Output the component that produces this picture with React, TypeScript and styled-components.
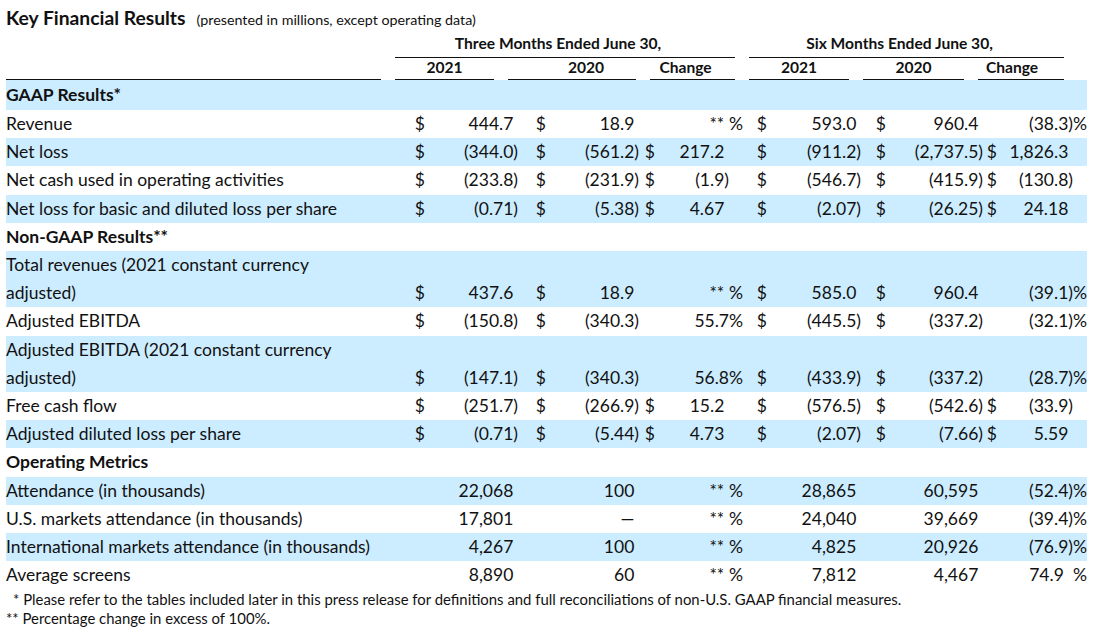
import React from 'react';
import styled, { createGlobalStyle } from 'styled-components';

const GlobalStyle = createGlobalStyle`
  html, body { margin: 0; padding: 0; background: #ffffff; }
  body {
    font-family: Lato, "Liberation Sans", Arial, sans-serif;
    color: #111111;
    -webkit-font-smoothing: antialiased;
  }
`;

const ROW_COLS = '394px 25px 93px 28px 93px 16px 88px 24px 94px 25px 97px 14px 90px';
const HEAD_COLS = '375px 99px 128px 85px 100px 101px 86px';
const RULE = '1.5px solid #111111';

const Page = styled.div`
  width: 1099px;
  height: 640px;
  padding-left: 6px;
  box-sizing: border-box;
  overflow: hidden;
`;

const TitleBar = styled.div`
  display: flex;
  align-items: baseline;
  gap: 11px;
  height: 32px;
  padding-top: 7px;
  box-sizing: border-box;
`;

const Title = styled.h1`
  margin: 0;
  font-size: 19.3px;
  font-weight: 700;
  line-height: 22px;
`;

const Subtitle = styled.span`
  font-size: 14.3px;
  line-height: 22px;
`;

const HeadGrid = styled.div`
  display: grid;
  grid-template-columns: ${HEAD_COLS};
  column-gap: 14px;
  font-size: 15.6px;
  font-weight: 700;
`;

const GroupHead = styled.div`
  grid-column: span 3;
  text-align: center;
  line-height: 18px;
  padding: 2px 0 5px;
  border-bottom: ${RULE};
  white-space: nowrap;
`;

const Blank = styled.div``;

const ColHead = styled.div`
  text-align: center;
  line-height: 18px;
  padding: 0 0 3px;
  border-bottom: ${RULE};
  white-space: nowrap;
`;

const ColRule = styled.div`
  border-bottom: ${RULE};
  padding: 0 0 3px;
  line-height: 18px;
`;

const ShiftText = styled.span<{ $shift: number }>`
  display: inline-block;
  transform: translateX(${p => p.$shift}px);
`;

const Table = styled.div`
  display: flex;
  flex-direction: column;
  width: 1081px;
  font-size: 17.5px;
`;

const Row = styled.div`
  display: grid;
  grid-template-columns: ${ROW_COLS};
  align-items: end;
  line-height: 28.2px;
  &:nth-child(odd) { background: #ccecff; }
  &:first-child { line-height: 30px; }
`;

const Label = styled.div<{ $bold?: boolean }>`
  font-weight: ${p => (p.$bold ? 700 : 400)};
  white-space: nowrap;
`;

const Num = styled.div`
  text-align: right;
  white-space: pre;
`;

const Ghost = styled.span`
  visibility: hidden;
`;

const Notes = styled.div`
  padding-top: 1px;
  font-size: 14.9px;
  line-height: 19px;
`;

const Note = styled.div<{ $indent?: number }>`
  padding-left: ${p => p.$indent ?? 0}px;
  white-space: nowrap;
`;

type DataRow = { kind: 'data'; label: string[]; c: string[] };
type SectionRow = { kind: 'section'; label: string };
type AnyRow = DataRow | SectionRow;

const sec = (label: string): SectionRow => ({ kind: 'section', label });
const row = (label: string | string[], c: string[]): DataRow => ({
  kind: 'data',
  label: Array.isArray(label) ? label : [label],
  c,
});

const rows: AnyRow[] = [
  sec('GAAP Results*'),
  row('Revenue', ['$', '444.7', '$', '18.9', '', '**[)]%', '$', '593.0', '$', '960.4', '', '(38.3)%']),
  row('Net loss', ['$', '(344.0)', '$', '(561.2)', '$', '217.2[)%]', '$', '(911.2)', '$', '(2,737.5)', '$', '1,826.3[)%]']),
  row('Net cash used in operating activities', ['$', '(233.8)', '$', '(231.9)', '$', '(1.9)[%]', '$', '(546.7)', '$', '(415.9)', '$', '(130.8)[%]']),
  row('Net loss for basic and diluted loss per share', ['$', '(0.71)', '$', '(5.38)', '$', '4.67[)%]', '$', '(2.07)', '$', '(26.25)', '$', '24.18[)%]']),
  sec('Non-GAAP Results**'),
  row(['Total revenues (2021 constant currency', 'adjusted)'], ['$', '437.6', '$', '18.9', '', '**[)]%', '$', '585.0', '$', '960.4', '', '(39.1)%']),
  row('Adjusted EBITDA', ['$', '(150.8)', '$', '(340.3)', '', '55.7%', '$', '(445.5)', '$', '(337.2)', '', '(32.1)%']),
  row(['Adjusted EBITDA (2021 constant currency', 'adjusted)'], ['$', '(147.1)', '$', '(340.3)', '', '56.8%', '$', '(433.9)', '$', '(337.2)', '', '(28.7)%']),
  row('Free cash flow', ['$', '(251.7)', '$', '(266.9)', '$', '15.2[)%]', '$', '(576.5)', '$', '(542.6)', '$', '(33.9)[%]']),
  row('Adjusted diluted loss per share', ['$', '(0.71)', '$', '(5.44)', '$', '4.73[)%]', '$', '(2.07)', '$', '(7.66)', '$', '5.59[)%]']),
  sec('Operating Metrics'),
  row('Attendance (in thousands)', ['', '22,068', '', '100', '', '**[)]%', '', '28,865', '', '60,595', '', '(52.4)%']),
  row('U.S. markets attendance (in thousands)', ['', '17,801', '', '—', '', '**[)]%', '', '24,040', '', '39,669', '', '(39.4)%']),
  row('International markets attendance (in thousands)', ['', '4,267', '', '100', '', '**[)]%', '', '4,825', '', '20,926', '', '(76.9)%']),
  row('Average screens', ['', '8,890', '', '60', '', '**[)]%', '', '7,812', '', '4,467', '', '74.9[)] %']),
];

const CHANGE_COLS = new Set([5, 11]);

function renderValue(raw: string, idx: number) {
  let spec = raw;
  if (!CHANGE_COLS.has(idx) && raw !== '' && !raw.endsWith(')')) spec = raw + '[)]';
  const parts = spec.split(/(\[[^\]]*\])/).filter(Boolean);
  return parts.map((p, i) =>
    p.startsWith('[') ? <Ghost key={i}>{p.slice(1, -1)}</Ghost> : <React.Fragment key={i}>{p}</React.Fragment>
  );
}

export default function App() {
  return (
    <>
      <GlobalStyle />
      <Page>
        <TitleBar>
          <Title>Key Financial Results</Title>
          <Subtitle>(presented in millions, except operating data)</Subtitle>
        </TitleBar>

        <HeadGrid>
          <Blank />
          <GroupHead>
            <ShiftText $shift={-7}>Three Months Ended June 30,</ShiftText>
          </GroupHead>
          <GroupHead>
            <ShiftText $shift={-7}>Six Months Ended June 30,</ShiftText>
          </GroupHead>
          <ColRule />
          <ColHead>2021</ColHead>
          <ColHead><ShiftText $shift={14}>2020</ShiftText></ColHead>
          <ColHead><ShiftText $shift={-7}>Change</ShiftText></ColHead>
          <ColHead>2021</ColHead>
          <ColHead>2020</ColHead>
          <ColHead><ShiftText $shift={-9}>Change</ShiftText></ColHead>
        </HeadGrid>

        <Table>
          {rows.map((r, i) =>
            r.kind === 'section' ? (
              <Row key={i}>
                <Label $bold>{r.label}</Label>
              </Row>
            ) : (
              <Row key={i}>
                <Label>
                  {r.label.map((l, j) => (
                    <React.Fragment key={j}>
                      {j > 0 && <br />}
                      {l}
                    </React.Fragment>
                  ))}
                </Label>
                {r.c.map((v, k) => (
                  <Num key={k}>{k % 2 === 0 ? v : renderValue(v, k)}</Num>
                ))}
              </Row>
            )
          )}
        </Table>

        <Notes>
          <Note $indent={7}>* Please refer to the tables included later in this press release for definitions and full reconciliations of non-U.S. GAAP financial measures.</Note>
          <Note>** Percentage change in excess of 100%.</Note>
        </Notes>
      </Page>
    </>
  );
}
